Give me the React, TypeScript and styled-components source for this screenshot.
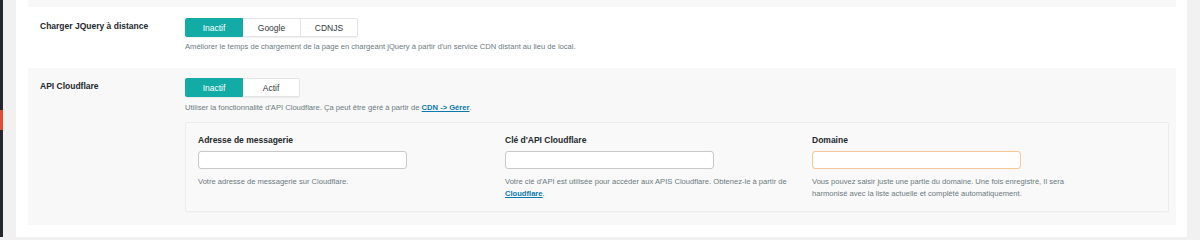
import React from "react";
import styled, { createGlobalStyle } from "styled-components";

const Global = createGlobalStyle`
  html, body { margin: 0; padding: 0; }
  body {
    background: #f1f1f1;
    font-family: "Liberation Sans", Arial, sans-serif;
    -webkit-font-smoothing: antialiased;
  }
  * { box-sizing: border-box; }
`;

const Page = styled.div`
  display: flex;
  height: 237px;
  overflow: hidden;
`;

const Sidebar = styled.div`
  width: 3px;
  flex: none;
  display: flex;
  flex-direction: column;
  background: #23282d;
`;

const SidebarMark = styled.div`
  margin-top: 110px;
  height: 20px;
  background: #e34a3a;
`;

const Gutter = styled.div<{ $w: number }>`
  width: ${(p) => p.$w}px;
  flex: none;
  background: #f1f1f1;
`;

const Card = styled.div`
  flex: 1;
  background: #ffffff;
  padding: 0 11px 0 12px;
  display: flex;
  flex-direction: column;
`;

const TopStrip = styled.div`
  height: 7px;
  background: #f8f8f8;
`;

const Row = styled.div<{ $alt?: boolean; $pt: number; $pb: number; $h?: number }>`
  display: grid;
  grid-template-columns: 157px 1fr;
  background: ${(p) => (p.$alt ? "#f8f8f8" : "#ffffff")};
  padding: ${(p) => p.$pt}px 0 ${(p) => p.$pb}px 0;
  ${(p) => (p.$h ? `height: ${p.$h}px;` : "")}
`;

const Label = styled.div`
  padding-left: 12px;
  margin-top: 1px;
  font-size: 8.5px;
  line-height: 14px;
  font-weight: 700;
  color: #23282d;
`;

const Field = styled.div`
  display: flex;
  flex-direction: column;
  align-items: flex-start;
`;

const Segmented = styled.div`
  display: flex;
  height: 19px;
  border-radius: 2px;
  box-shadow: 0 1px 1px rgba(0, 0, 0, 0.06);
`;

const SegButton = styled.button<{ $active?: boolean; $w: number }>`
  width: ${(p) => p.$w}px;
  height: 19px;
  margin: 0;
  padding: 0;
  font-family: inherit;
  font-size: 8.5px;
  color: ${(p) => (p.$active ? "#ffffff" : "#32373c")};
  background: ${(p) => (p.$active ? "#13aba5" : "#ffffff")};
  border: 1px solid ${(p) => (p.$active ? "#13aba5" : "#e2e4e7")};
  border-left-width: ${(p) => (p.$active ? 1 : 0)}px;
  cursor: pointer;
  &:first-child { border-radius: 2px 0 0 2px; }
  &:last-child { border-radius: 0 2px 2px 0; }
`;

const Desc = styled.p<{ $mt: number }>`
  margin: ${(p) => p.$mt}px 0 0 0;
  font-size: 7.6px;
  line-height: 12px;
  color: #6c7a80;
`;

const Link = styled.a`
  color: #0a79ad;
  font-weight: 700;
  text-decoration: underline;
`;

const SubBox = styled.div`
  margin-top: 8px;
  width: 984px;
  height: 90px;
  border: 1px solid #ececec;
  border-radius: 2px;
  background: #f9f9f9;
  box-shadow: 0 1px 1px rgba(0, 0, 0, 0.02);
  padding: 11px 0 0 12px;
  display: grid;
  grid-template-columns: 307px 307px 307px;
`;

const SubField = styled.div`
  display: flex;
  flex-direction: column;
`;

const SubLabel = styled.div`
  font-size: 8.5px;
  line-height: 12px;
  font-weight: 700;
  color: #23282d;
`;

const Input = styled.input<{ $warn?: boolean }>`
  margin-top: 5px;
  width: 209px;
  height: 18px;
  padding: 0 6px;
  background: #ffffff;
  border: 1px solid ${(p) => (p.$warn ? "#f6c796" : "#c8c8c8")};
  border-radius: 3px;
  font-family: inherit;
  font-size: 8px;
  outline: none;
`;

const Help = styled.p`
  margin: 7px 0 0 0;
  max-width: 284px;
  font-size: 7.6px;
  line-height: 12px;
  color: #6c7a80;
`;

export default function App() {
  return (
    <>
      <Global />
      <Page>
        <Sidebar>
          <SidebarMark />
        </Sidebar>
        <Gutter $w={13} />
        <Card>
          <TopStrip />
          <Row $pt={11} $pb={0} $h={61}>
            <Label>Charger JQuery à distance</Label>
            <Field>
              <Segmented>
                <SegButton $active $w={58}>Inactif</SegButton>
                <SegButton $w={58}>Google</SegButton>
                <SegButton $w={57}>CDNJS</SegButton>
              </Segmented>
              <Desc $mt={4}>
                Améliorer le temps de chargement de la page en chargeant jQuery à partir d'un service CDN distant au lieu de local.
              </Desc>
            </Field>
          </Row>
          <Row $alt $pt={10} $pb={13}>
            <Label>API Cloudflare</Label>
            <Field>
              <Segmented>
                <SegButton $active $w={58}>Inactif</SegButton>
                <SegButton $w={57}>Actif</SegButton>
              </Segmented>
              <Desc $mt={5}>
                Utiliser la fonctionnalité d'API Cloudflare. Ça peut être géré à partir de{" "}
                <Link href="#">CDN -&gt; Gérer</Link>.
              </Desc>
              <SubBox>
                <SubField>
                  <SubLabel>Adresse de messagerie</SubLabel>
                  <Input type="text" />
                  <Help>Votre adresse de messagerie sur Cloudflare.</Help>
                </SubField>
                <SubField>
                  <SubLabel>Clé d'API Cloudflare</SubLabel>
                  <Input type="text" />
                  <Help>
                    Votre clé d'API est utilisée pour accéder aux APIS Cloudflare. Obtenez-le à partir de{" "}
                    <Link href="#">Cloudflare</Link>.
                  </Help>
                </SubField>
                <SubField>
                  <SubLabel>Domaine</SubLabel>
                  <Input type="text" $warn />
                  <Help>
                    Vous pouvez saisir juste une partie du domaine. Une fois enregistré, Il sera harmonisé avec la liste actuelle et complété automatiquement.
                  </Help>
                </SubField>
              </SubBox>
            </Field>
          </Row>
        </Card>
        <Gutter $w={13} />
      </Page>
    </>
  );
}
